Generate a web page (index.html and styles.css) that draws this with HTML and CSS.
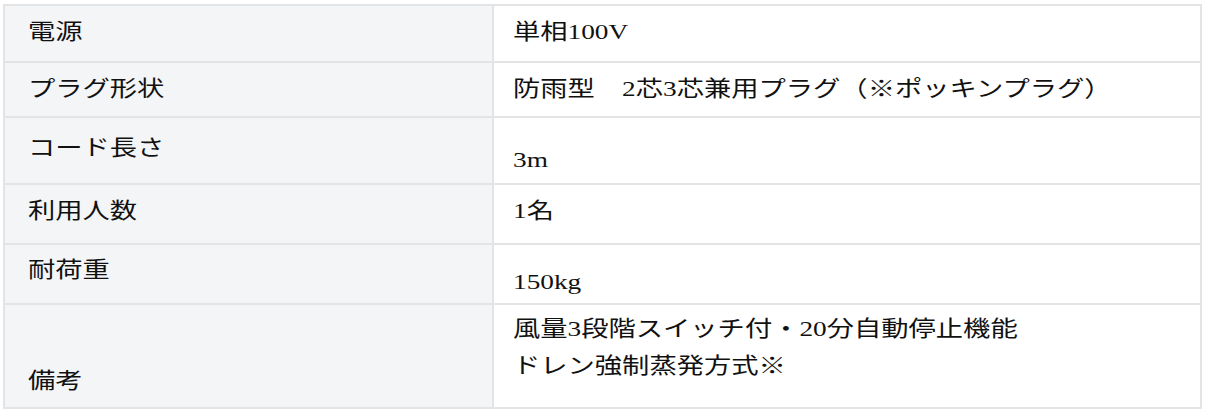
FILE: index.html
```html
<!DOCTYPE html>
<html lang="ja">
<head>
<meta charset="utf-8">
<link rel="stylesheet" href="styles.css">
</head>
<body>
<table class="spec">
  <tbody>
    <tr class="r1">
      <th><span class="t">電源</span></th>
      <td><span class="t">単相100V</span></td>
    </tr>
    <tr class="r2">
      <th><span class="t">プラグ形状</span></th>
      <td><span class="t">防雨型　2芯3芯兼用プラグ（※ポッキンプラグ）</span></td>
    </tr>
    <tr class="r3">
      <th><span class="t">コード長さ</span></th>
      <td><span class="t">3m</span></td>
    </tr>
    <tr class="r4">
      <th><span class="t">利用人数</span></th>
      <td><span class="t">1名</span></td>
    </tr>
    <tr class="r5">
      <th><span class="t">耐荷重</span></th>
      <td><span class="t">150kg</span></td>
    </tr>
    <tr class="r6">
      <th><span class="t">備考</span></th>
      <td>
        <div class="line"><span class="t">風量3段階スイッチ付・20分自動停止機能</span></div>
        <div class="line"><span class="t">ドレン強制蒸発方式※</span></div>
      </td>
    </tr>
  </tbody>
</table>
</body>
</html>
```

FILE: styles.css
```css
html, body {
  margin: 0;
  padding: 0;
  background: #ffffff;
}
body {
  padding: 4px 4px 0 3px;
  font-family: "Liberation Serif", "Noto Sans CJK JP", serif;
  color: #111111;
}
.spec {
  width: 100%;
  table-layout: fixed;
  border-collapse: separate;
  border-spacing: 0;
  border-top: 2px solid #e3e4e6;
  border-left: 2px solid #e3e4e6;
  font-size: 22px;
  line-height: 30px;
}
.spec th,
.spec td {
  border-right: 2px solid #e3e4e6;
  border-bottom: 2px solid #e3e4e6;
  text-align: left;
  font-weight: normal;
  vertical-align: top;
  white-space: nowrap;
}
.spec th {
  width: 444px;
  background: #f4f5f7;
  padding-left: 23px;
  padding-right: 20px;
}
.spec td {
  padding-left: 19px;
  padding-right: 19px;
}
.t {
  display: inline-block;
  transform: scaleX(1.24);
  transform-origin: left center;
}
.r1 th, .r1 td { padding-top: 11px; padding-bottom: 14px; }
.r2 th, .r2 td { padding-top: 11px; padding-bottom: 12px; }
.r3 th { padding-top: 15px; padding-bottom: 20px; }
.r3 td { padding-top: 27px; padding-bottom: 8px; }
.r4 th, .r4 td { padding-top: 11px; padding-bottom: 17px; }
.r5 th { padding-top: 10px; padding-bottom: 18px; }
.r5 td { padding-top: 22px; padding-bottom: 6px; }
.r6 th { padding-top: 61px; padding-bottom: 11px; }
.r6 td { padding-top: 5px; padding-bottom: 23px; }
.line { line-height: 37px; }
```
